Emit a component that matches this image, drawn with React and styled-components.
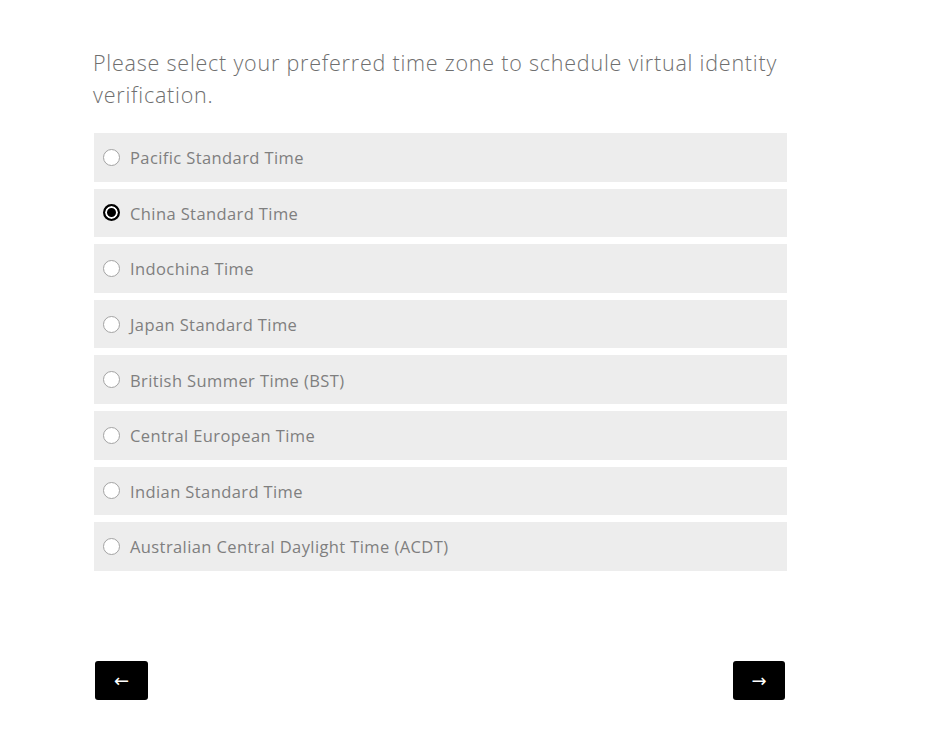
import React, { useState } from 'react'
import styled, { createGlobalStyle } from 'styled-components'

const GlobalStyle = createGlobalStyle`
  body {
    margin: 0;
    background: #ffffff;
    font-family: "Open Sans", "Liberation Sans", sans-serif;
  }
`

const Page = styled.div`
  width: 693px;
  padding: 47px 0 0 94px;
`

const Title = styled.p`
  margin: 0 0 22px -1px;
  font-size: 21.5px;
  line-height: 32px;
  font-weight: 300;
  color: #6f6f6f;
  letter-spacing: 0.78px;
`

const Options = styled.div`
  display: flex;
  flex-direction: column;
  gap: 7px;
`

const Option = styled.label`
  display: flex;
  align-items: center;
  height: 48.6px;
  padding-left: 9px;
  background: #ededed;
  cursor: pointer;
`

const Radio = styled.input`
  appearance: none;
  box-sizing: border-box;
  margin: 0 10px 0 0;
  width: 17px;
  height: 17px;
  border-radius: 50%;
  border: 1px solid #a3a3a3;
  background: #fff;
  &:checked {
    border: 2px solid #000;
    box-shadow: inset 0 0 0 2px #fff;
    background: #000;
  }
`

const Label = styled.span`
  font-size: 16.5px;
  color: #7f7f7f;
  letter-spacing: 0.4px;
  padding-top: 1px;
`

const Nav = styled.div`
  display: flex;
  justify-content: space-between;
  margin-top: 90px;
  padding: 0 2px 0 1px;
`

const NavButton = styled.button`
  width: ${p => p.w}px;
  height: 39px;
  border: none;
  border-radius: 3px;
  background: #000;
  color: #fff;
  font-size: 18px;
  font-family: "DejaVu Sans", sans-serif;
  display: flex;
  align-items: center;
  justify-content: center;
  padding: 0;
  cursor: pointer;
`

const zones = [
  'Pacific Standard Time',
  'China Standard Time',
  'Indochina Time',
  'Japan Standard Time',
  'British Summer Time (BST)',
  'Central European Time',
  'Indian Standard Time',
  'Australian Central Daylight Time (ACDT)'
]

const App = () => {
  const [selected, setSelected] = useState('China Standard Time')
  return (
    <>
      <GlobalStyle />
      <Page>
        <Title>
          Please select your preferred time zone to schedule virtual identity verification.
        </Title>
        <Options>
          {zones.map(z => (
            <Option key={z}>
              <Radio
                type="radio"
                name="tz"
                checked={selected === z}
                onChange={() => setSelected(z)}
              />
              <Label>{z}</Label>
            </Option>
          ))}
        </Options>
        <Nav>
          <NavButton w={53}>←</NavButton>
          <NavButton w={52}>→</NavButton>
        </Nav>
      </Page>
    </>
  )
}

export default App
